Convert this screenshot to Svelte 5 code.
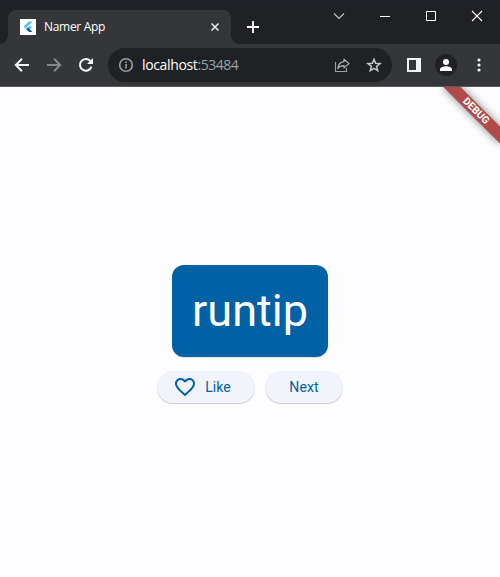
<script>
  let word = $state('runtip');
  let liked = $state(false);
</script>

<div class="window">
  <header class="tabstrip">
    <div class="tab">
      <svg class="favicon" width="16" height="16" viewBox="0 0 16 16">
        <rect width="16" height="16" fill="#fff" />
        <path d="M9 2.6h3.4L5.4 9.5 3.6 7.8z" fill="#42bdf5" />
        <path d="M9 7.5h3.4L9.7 10.2l-1.6 1.7-2-1.8z" fill="#42b8f0" />
        <path d="M6.3 10.2 8 8.6l4.4 4.4H9z" fill="#075baa" />
      </svg>
      <span class="title">Namer App</span>
      <svg class="close" width="10" height="10" viewBox="0 0 10 10"><path d="M1.5 1.5l7 7m0-7l-7 7" stroke="#e8eaed" stroke-width="1.6" /></svg>
      <i class="foot left"></i><i class="foot right"></i>
    </div>
    <svg class="plus" width="12" height="12" viewBox="0 0 12 12"><path d="M6 0v12M0 6h12" stroke="#fff" stroke-width="1.8" /></svg>
    <div class="controls">
      <svg width="12" height="12" viewBox="0 0 12 12"><path d="M1 3.5l5 5 5-5" fill="none" stroke="#c8c9cb" stroke-width="1.1" /></svg>
      <svg width="12" height="12" viewBox="0 0 12 12"><path d="M1 6.5h10" stroke="#fff" /></svg>
      <svg width="12" height="12" viewBox="0 0 12 12"><path d="M1.5 1.5h9v9h-9z" fill="none" stroke="#fff" /></svg>
      <svg width="12" height="12" viewBox="0 0 12 12"><path d="M1 1l10 10M11 1L1 11" stroke="#fff" stroke-width="1.1" /></svg>
    </div>
  </header>

  <nav class="toolbar">
    <svg width="16" height="16" viewBox="0 0 16 16"><path d="M15 8H2M8 1.7L1.8 8 8 14.3" fill="none" stroke="#f1f3f4" stroke-width="2" /></svg>
    <svg width="16" height="16" viewBox="0 0 16 16"><path d="M1 8h13M8 1.7L14.2 8 8 14.3" fill="none" stroke="#85878a" stroke-width="2" /></svg>
    <svg width="16" height="16" viewBox="0 0 16 16"><path d="M13.5 9.6A5.9 5.9 0 1 1 12.4 4" fill="none" stroke="#f1f3f4" stroke-width="2" /><path d="M15 1v6H9z" fill="#f1f3f4" /></svg>
    <div class="address">
      <svg width="16" height="16" viewBox="0 0 16 16"><circle cx="8" cy="8" r="6.3" fill="none" stroke="#9aa0a6" stroke-width="1.6" /><path d="M8 7v4.4M8 4.4v1.5" stroke="#9aa0a6" stroke-width="1.6" /></svg>
      <span class="url">localhost<span class="port">:53484</span></span>
      <svg class="share" width="16" height="16" viewBox="0 0 16 16"><path d="M1.5 5v9.5h11V11" fill="none" stroke="#9da0a4" stroke-width="1.1" /><path d="M10 2.2l5 4.4-5 4.3V8.6c-3 0-4.9.8-6.2 3C4 7.8 6 5 10 4.6z" fill="none" stroke="#b2b5b8" stroke-width="1.2" stroke-linejoin="round" /></svg>
      <svg class="star" width="16" height="16" viewBox="0 0 16 16"><path d="M8 2.2l1.6 4 4.4.3-3.4 2.8 1.1 4.3L8 11.3l-3.7 2.3 1.1-4.3L2 6.5l4.4-.3z" fill="none" stroke="#c4c7ca" stroke-width="1.5" /></svg>
    </div>
    <svg class="panel" width="14" height="14" viewBox="0 0 14 14"><path fill-rule="evenodd" d="M0 0h14v14H0zM2 2v10h7V2z" fill="#f1f3f4" /></svg>
    <svg class="avatar" width="22" height="22" viewBox="0 0 22 22"><circle cx="11" cy="11" r="11" fill="#202124" /><circle cx="11" cy="8" r="3" fill="#fff" /><path d="M5 17v-1.8c0-2 3.5-3 6-3s6 1 6 3V17z" fill="#fff" /></svg>
    <svg class="more" width="4" height="14" viewBox="0 0 4 14"><circle cx="2" cy="2" r="1.6" fill="#f1f3f4" /><circle cx="2" cy="7" r="1.6" fill="#f1f3f4" /><circle cx="2" cy="12" r="1.6" fill="#f1f3f4" /></svg>
  </nav>

  <main>
    <div class="banner">DEBUG</div>
    <div class="card">{word}</div>
    <div class="actions">
      <button class="like" onclick={() => (liked = !liked)}>
        <svg width="24" height="24" viewBox="0 0 24 24"><path fill="#0061a4" d={liked ? 'M12 21.35l-1.45-1.32C5.4 15.36 2 12.28 2 8.5 2 5.42 4.42 3 7.5 3c1.74 0 3.41.81 4.5 2.09C13.09 3.81 14.76 3 16.5 3 19.58 3 22 5.42 22 8.5c0 3.78-3.4 6.86-8.55 11.54z' : 'M16.5 3c-1.74 0-3.41.81-4.5 2.09C10.91 3.81 9.24 3 7.5 3 4.42 3 2 5.42 2 8.5c0 3.78 3.4 6.86 8.55 11.54L12 21.35l1.45-1.32C18.6 15.36 22 12.28 22 8.5 22 5.42 19.58 3 16.5 3zm-4.4 15.55l-.1.1-.1-.1C7.14 14.24 4 11.39 4 8.5 4 6.5 5.5 5 7.5 5c1.54 0 3.04.99 3.57 2.36h1.87C13.46 5.99 14.96 5 16.5 5c2 0 3.5 1.5 3.5 3.5 0 2.89-3.14 5.74-7.9 10.05z'} /></svg>
        <span>Like</span>
      </button>
      <button class="next">Next</button>
    </div>
  </main>
</div>

<style>
  :global(body) { margin: 0; }
  .window { width: 500px; height: 577px; display: flex; flex-direction: column; overflow: hidden; background: #fdfcff; }
  svg { display: block; flex: none; }
  .tabstrip { box-sizing: border-box; height: 44px; flex: none; display: flex; padding-left: 8px; background: #202124; border-top: 1px solid #20202e; }
  .tab { position: relative; box-sizing: border-box; width: 223px; height: 34px; margin-top: 9px; padding: 0 11px 0 12px; display: flex; align-items: center; background: #35363a; border-radius: 8px 8px 0 0; }
  .title { flex: 1; margin-left: 8px; font: 12px/16px "Open Sans", "Noto Sans", sans-serif; letter-spacing: -0.3px; color: #fff; }
  .foot { position: absolute; bottom: 0; width: 8px; height: 8px; }
  .left { left: -8px; background: radial-gradient(circle at 0 0, transparent 7.5px, #35363a 8px); }
  .right { right: -8px; background: radial-gradient(circle at 100% 0, transparent 7.5px, #35363a 8px); }
  .plus { margin: 20px 0 0 16px; }
  .controls { display: flex; gap: 34px; margin: 9px 17px 0 auto; }
  .toolbar { box-sizing: border-box; height: 43px; flex: none; display: flex; align-items: center; padding: 0 19px 0 14px; background: #35363a; border-bottom: 1px solid #5b5a5d; }
  .toolbar > svg + svg { margin-left: 16px; }
  .address { box-sizing: border-box; width: 284px; height: 34px; margin-left: 14px; padding: 0 10px; display: flex; align-items: center; border-radius: 17px; background: #202124; }
  .url { margin-left: 8px; font: 14px/20px "Open Sans", "Noto Sans", sans-serif; letter-spacing: -0.35px; color: #fff; }
  .port { color: #9aa0a6; letter-spacing: -0.5px; }
  .share { margin-left: auto; }
  .star { margin-left: 16px; }
  .panel { margin-left: 15px; }
  .toolbar > .avatar { margin-left: 14px; }
  .toolbar > .more { margin-left: 20px; }
  main { position: relative; flex: 1; display: flex; flex-direction: column; align-items: center; justify-content: center; overflow: hidden; background: #fdfcff; font-family: Roboto, sans-serif; }
  .banner { position: absolute; right: -40px; top: 28px; width: 80px; height: 12px; transform-origin: 40px -28px; transform: rotate(45deg); background: #b04a4b; box-shadow: 0 0 8px rgba(0, 0, 0, 0.5); color: #fff; font-size: 10.2px; font-weight: 700; line-height: 12px; text-align: center; }
  .card { box-sizing: border-box; width: 156px; height: 92px; margin-top: 3px; border-radius: 12px; background: #0061a4; box-shadow: 0 1px 1px rgba(0, 0, 0, 0.12); color: #fff; font-size: 45px; line-height: 92px; text-align: center; }
  .actions { display: flex; gap: 10px; margin-top: 14px; }
  button { box-sizing: border-box; height: 32px; padding: 0; border: 0; border-radius: 16px; display: flex; align-items: center; justify-content: center; background: #f0f3fa; box-shadow: 0 1px 1px rgba(0, 0, 0, 0.2); color: #0061a4; font: 14px/20px Roboto, sans-serif; letter-spacing: 0.1px; }
  .like { width: 98px; padding-right: 8px; gap: 8px; }
  .next { width: 78px; }
</style>
